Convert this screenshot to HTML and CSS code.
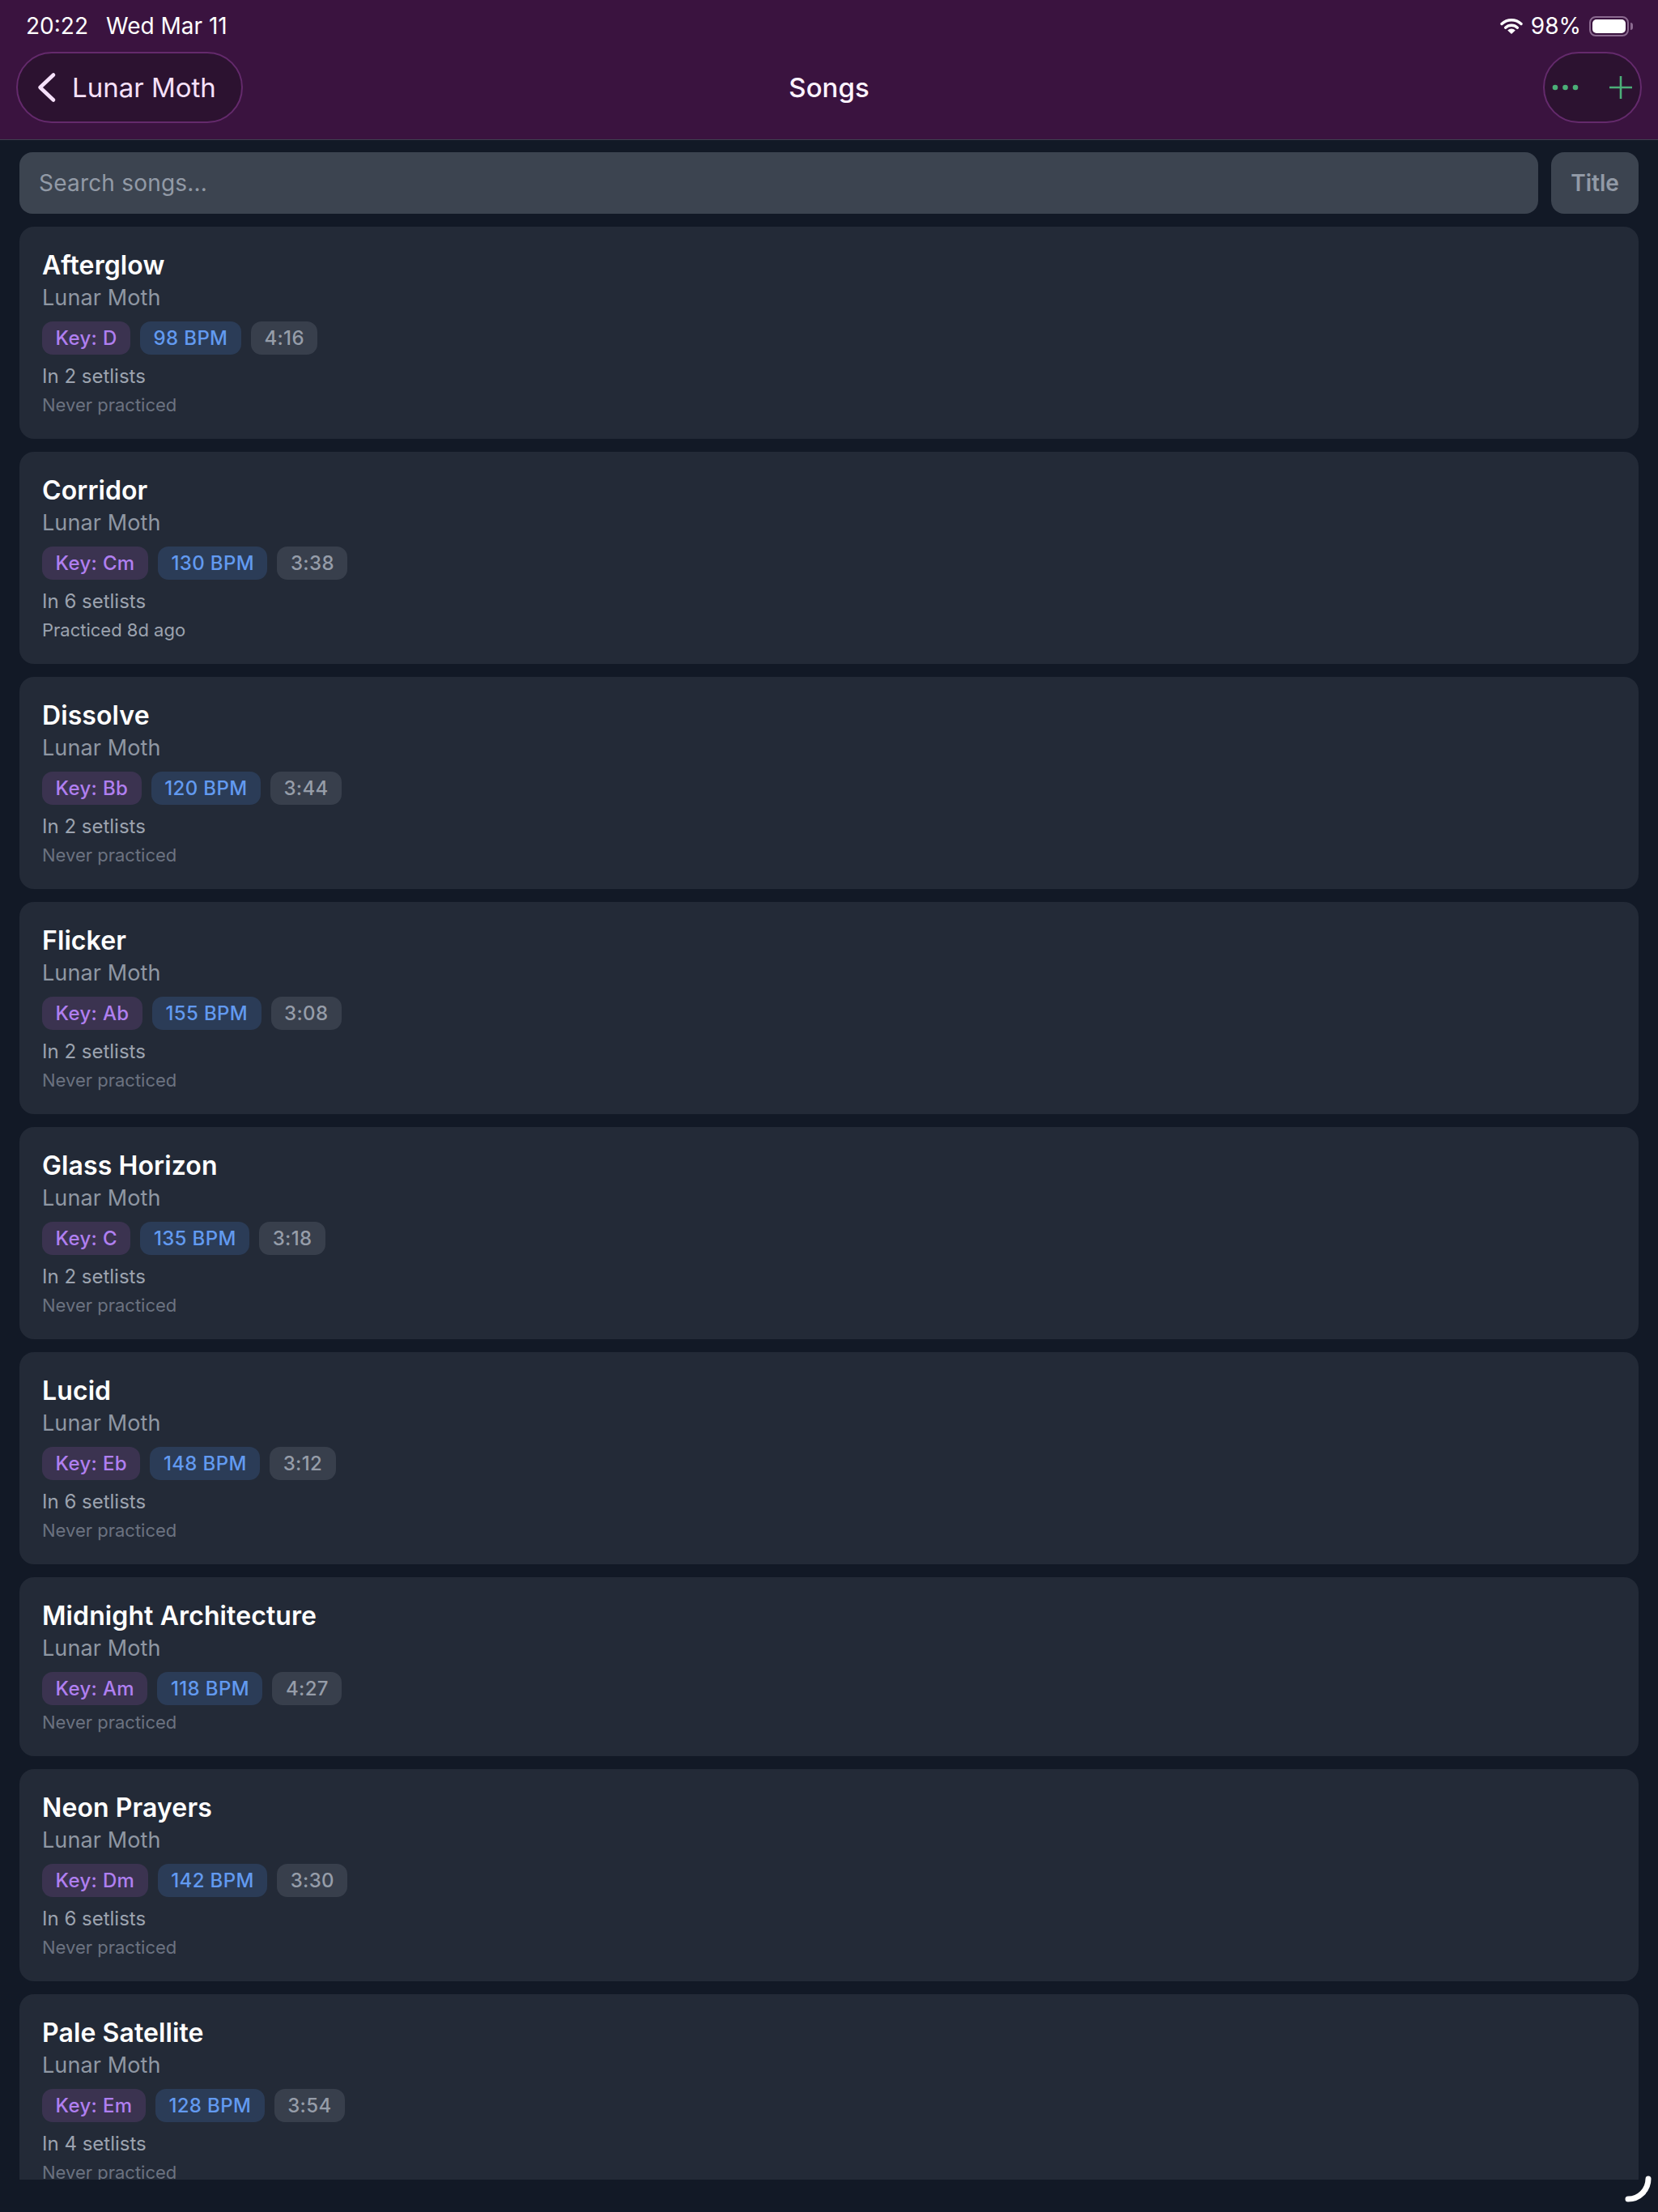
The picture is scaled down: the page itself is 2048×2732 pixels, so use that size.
FILE: index.html
```html
<!DOCTYPE html>
<html lang="en">
<head>
	<meta charset="utf-8">
	<title>Songs</title>
	<link rel="stylesheet" href="styles.css">
</head>
<body>
	<header class="top">
		<div class="status">
			<div class="status-left"><span>20:22</span><span>Wed Mar 11</span></div>
			<div class="status-right">
				<svg class="wifi" width="28" height="20" viewBox="0 0 28 20">
					<path d="M2 7.5a17.5 17.5 0 0 1 24 0" fill="none" stroke="#fff" stroke-width="3.4" stroke-linecap="round"/>
					<path d="M6.6 12.2a10.8 10.8 0 0 1 14.8 0" fill="none" stroke="#fff" stroke-width="3.4" stroke-linecap="round"/>
					<path d="M14 20l-4.8-4.4a6.6 6.6 0 0 1 9.6 0z" fill="#fff"/>
				</svg>
				<span>98%</span>
				<div class="battery"><div class="battery-fill"></div></div>
			</div>
		</div>
		<nav class="nav">
			<div class="nav-left">
				<a class="pill back">
					<svg width="24" height="40" viewBox="0 0 24 40"><path d="M20 4.5L3.5 20L20 35.5" fill="none" stroke="#f6e0fa" stroke-width="4.6" stroke-linecap="round" stroke-linejoin="round"/></svg>
					<span>Lunar Moth</span>
				</a>
			</div>
			<h1 class="nav-title">Songs</h1>
			<div class="nav-right">
				<div class="pill actions">
					<svg width="36" height="10" viewBox="0 0 36 10" fill="#4cae78"><circle cx="5" cy="5" r="3.3"/><circle cx="17.5" cy="5" r="3.3"/><circle cx="30" cy="5" r="3.3"/></svg>
					<svg width="28" height="28" viewBox="0 0 28 28"><path d="M14 0v28M0 14h28" stroke="#4cae78" stroke-width="2.6"/></svg>
				</div>
			</div>
		</nav>
	</header>

	<main class="content">
		<div class="search-row">
			<div class="search">Search songs...</div>
			<div class="sort">Title</div>
		</div>
		<div class="list">
			<div class="card">
				<div class="name">Afterglow</div>
				<div class="artist">Lunar Moth</div>
				<div class="tags"><span class="tag key">Key: D</span><span class="tag bpm">98 BPM</span><span class="tag len">4:16</span></div>
				<div class="setlists">In 2 setlists</div>
				<div class="practice">Never practiced</div>
			</div>
			<div class="card">
				<div class="name">Corridor</div>
				<div class="artist">Lunar Moth</div>
				<div class="tags"><span class="tag key">Key: Cm</span><span class="tag bpm">130 BPM</span><span class="tag len">3:38</span></div>
				<div class="setlists">In 6 setlists</div>
				<div class="practice done">Practiced 8d ago</div>
			</div>
			<div class="card">
				<div class="name">Dissolve</div>
				<div class="artist">Lunar Moth</div>
				<div class="tags"><span class="tag key">Key: Bb</span><span class="tag bpm">120 BPM</span><span class="tag len">3:44</span></div>
				<div class="setlists">In 2 setlists</div>
				<div class="practice">Never practiced</div>
			</div>
			<div class="card">
				<div class="name">Flicker</div>
				<div class="artist">Lunar Moth</div>
				<div class="tags"><span class="tag key">Key: Ab</span><span class="tag bpm">155 BPM</span><span class="tag len">3:08</span></div>
				<div class="setlists">In 2 setlists</div>
				<div class="practice">Never practiced</div>
			</div>
			<div class="card">
				<div class="name">Glass Horizon</div>
				<div class="artist">Lunar Moth</div>
				<div class="tags"><span class="tag key">Key: C</span><span class="tag bpm">135 BPM</span><span class="tag len">3:18</span></div>
				<div class="setlists">In 2 setlists</div>
				<div class="practice">Never practiced</div>
			</div>
			<div class="card">
				<div class="name">Lucid</div>
				<div class="artist">Lunar Moth</div>
				<div class="tags"><span class="tag key">Key: Eb</span><span class="tag bpm">148 BPM</span><span class="tag len">3:12</span></div>
				<div class="setlists">In 6 setlists</div>
				<div class="practice">Never practiced</div>
			</div>
			<div class="card">
				<div class="name">Midnight Architecture</div>
				<div class="artist">Lunar Moth</div>
				<div class="tags"><span class="tag key">Key: Am</span><span class="tag bpm">118 BPM</span><span class="tag len">4:27</span></div>
				<div class="practice">Never practiced</div>
			</div>
			<div class="card">
				<div class="name">Neon Prayers</div>
				<div class="artist">Lunar Moth</div>
				<div class="tags"><span class="tag key">Key: Dm</span><span class="tag bpm">142 BPM</span><span class="tag len">3:30</span></div>
				<div class="setlists">In 6 setlists</div>
				<div class="practice">Never practiced</div>
			</div>
			<div class="card">
				<div class="name">Pale Satellite</div>
				<div class="artist">Lunar Moth</div>
				<div class="tags"><span class="tag key">Key: Em</span><span class="tag bpm">128 BPM</span><span class="tag len">3:54</span></div>
				<div class="setlists">In 4 setlists</div>
				<div class="practice">Never practiced</div>
			</div>
		</div>
	</main>

	<!-- corner resize arc -->
	<svg class="corner" width="48" height="48" viewBox="0 0 48 48"><path d="M36 7A25 25 0 0 1 11 32" fill="none" stroke="#fff" stroke-width="7" stroke-linecap="round"/></svg>
</body>
</html>
```

FILE: styles.css
```css
body {
	margin: 0;
	width: 2048px;
	height: 2732px;
	overflow: hidden;
	display: flex;
	flex-direction: column;
	background-color: #121926;
	font-family: Inter, "Noto Sans", sans-serif;
	color: #fff;
}
.top {
	height: 172px;
	flex: none;
	background-color: #3a133f;
	border-bottom: 1px solid #3f3f50;
}
.status {
	height: 64px;
	padding: 0 30px 0 32px;
	display: flex;
	align-items: center;
	justify-content: space-between;
	font-size: 28px;
}
.status-left {
	display: flex;
	gap: 22px;
}
.status-right {
	display: flex;
	align-items: center;
	gap: 10px;
}
.battery {
	position: relative;
	box-sizing: border-box;
	width: 49px;
	height: 25px;
	margin-right: 6px;
	padding: 2px;
	border: 2px solid #8b6a90;
	border-radius: 8px;
}
.battery:after {
	content: "";
	position: absolute;
	right: -7px;
	top: 6px;
	width: 3px;
	height: 9px;
	background-color: #8b6a90;
	border-radius: 0 3px 3px 0;
}
.battery-fill {
	height: 100%;
	background-color: #fff;
	border-radius: 5px;
}
.nav {
	display: grid;
	grid-template-columns: 1fr auto 1fr;
	align-items: center;
	padding: 0 20px;
}
.nav-right {
	display: flex;
	justify-content: flex-end;
}
.nav-title {
	margin: 0;
	font-size: 33px;
	font-weight: 500;
	color: #fdf3ff;
}
.pill {
	display: inline-flex;
	align-items: center;
	box-sizing: border-box;
	height: 88px;
	border: 2px solid #642a6c;
	border-radius: 44px;
	background-color: #2c1230;
}
.back {
	width: 280px;
	padding-left: 24px;
	gap: 19px;
	font-size: 33px;
	color: #f6e0fa;
}
.actions {
	width: 122px;
	padding: 0 10px 0 8px;
	justify-content: space-between;
}
.content {
	flex: 1;
	min-height: 0;
	padding: 15px 24px 40px;
	display: flex;
	flex-direction: column;
	gap: 16px;
}
.search-row {
	display: flex;
	gap: 16px;
	flex: none;
}
.search, .sort {
	height: 76px;
	display: flex;
	align-items: center;
	background-color: #3c4450;
	border-radius: 16px;
	font-size: 28px;
	color: #929aa6;
}
.search {
	flex: 1;
	padding-left: 24px;
	letter-spacing: .2px;
}
.sort {
	width: 108px;
	justify-content: center;
	font-weight: 600;
}
.list {
	flex: 1;
	min-height: 0;
	overflow: hidden;
	display: flex;
	flex-direction: column;
	gap: 16px;
}
.card {
	flex: none;
	padding: 26px 28px 26px;
	background-color: #232a37;
	border-radius: 18px;
}
.name {
	font-size: 32px;
	line-height: 44px;
	font-weight: 600;
	letter-spacing: .1px;
}
.artist {
	font-size: 27px;
	line-height: 36px;
	letter-spacing: .1px;
	color: #8f97a3;
}
.tags {
	display: flex;
	gap: 12px;
	margin: 11px 0 5px;
}
.tag {
	height: 41px;
	padding: 0 16.5px;
	display: flex;
	align-items: center;
	border-radius: 13px;
	font-size: 24px;
	font-weight: 500;
	letter-spacing: .35px;
}
.key {
	background-color: #3b3350;
	color: #b07ff0;
}
.bpm {
	background-color: #2b3c57;
	color: #629af0;
}
.len {
	background-color: #383f4c;
	color: #969da9;
}
.setlists {
	padding-top: 3px;
	font-size: 24px;
	line-height: 38px;
	color: #9ca3af;
}
.practice {
	font-size: 22px;
	line-height: 32px;
	color: #6b7280;
}
.practice.done {
	color: #9ca3af;
}
.corner {
	position: absolute;
	right: 0;
	bottom: 0;
}
```
